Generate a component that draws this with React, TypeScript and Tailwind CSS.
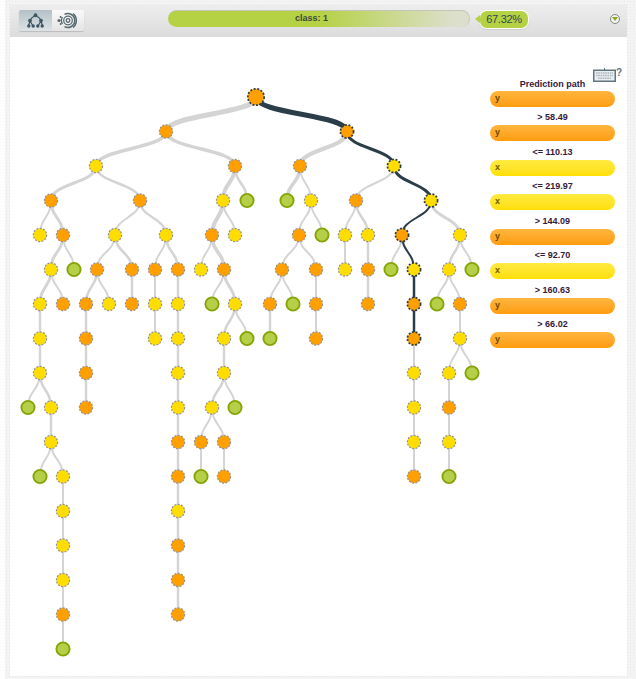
import React from "react";

type C = "O" | "Y" | "G";
type N = { x: number; c: C; w: number; k: N[]; p?: boolean };
const n = (x: number, c: C, w: number, ...k: N[]): N => ({ x, c, w, k });
const d = (x: number, c: C, w: number, ...k: N[]): N => ({ x, c, w, k, p: true });
const chain = (x: number, w: number, cs: C[]): N => {
  const [h, ...r] = cs;
  return n(x, h, w, ...(r.length ? [chain(x, w, r)] : []));
};

const tree: N = d(256, "O", 0,
  n(166, "O", 5,
    n(96, "Y", 3.5,
      n(51, "O", 3,
        n(40, "Y", 2),
        n(63, "O", 3,
          n(51, "Y", 3,
            n(40, "Y", 3,
              n(40, "Y", 2.5,
                n(40, "Y", 2.5,
                  n(28, "G", 2),
                  n(51, "Y", 2.5,
                    n(51, "Y", 2.5,
                      n(40, "G", 2),
                      chain(63, 2, ["Y", "Y", "Y", "Y", "O", "G"])))))),
            n(63, "O", 2)),
          n(74, "G", 2))),
      n(140, "O", 2.5,
        n(115, "Y", 2,
          n(97, "O", 2,
            chain(86, 2.5, ["O", "O", "O", "O"]),
            n(109, "Y", 2)),
          chain(132, 2.5, ["O", "O"])),
        n(166, "Y", 2.5,
          n(155, "O", 2, chain(155, 2, ["Y", "Y"])),
          chain(178, 2.5, ["O", "Y", "Y", "Y", "Y", "O", "O", "Y", "O", "O", "O"])))),
    n(235, "O", 3.5,
      n(223, "Y", 4,
        n(212, "O", 4,
          n(201, "Y", 2),
          n(224, "O", 3.5,
            n(212, "G", 2),
            n(235, "Y", 3,
              n(224, "Y", 2.5,
                n(224, "Y", 2.5,
                  n(212, "Y", 2.5,
                    n(201, "O", 2, n(201, "G", 2)),
                    n(224, "O", 2, n(224, "O", 2))),
                  n(235, "G", 2))),
              n(247, "G", 2)))),
        n(235, "Y", 2)),
      n(247, "G", 2.5))),
  d(347, "O", 5,
    n(300, "O", 4,
      n(287, "G", 3.5),
      n(311, "Y", 2,
        n(299, "O", 2,
          n(282, "O", 2,
            n(270, "O", 2, n(270, "G", 2.5)),
            n(293, "G", 2)),
          n(316, "O", 2, chain(316, 2, ["O", "O"]))),
        n(322, "G", 2))),
    d(394, "Y", 3,
      n(356, "O", 2,
        chain(345, 2, ["Y", "Y"]),
        chain(368, 2.5, ["Y", "O", "O"])),
      d(431, "Y", 3,
        d(402, "O", 2,
          n(391, "G", 2),
          d(414, "Y", 2,
            d(414, "O", 2.5,
              d(414, "O", 2.5, chain(414, 2, ["Y", "Y", "Y", "O"]))))),
        n(460, "Y", 3,
          n(449, "Y", 2.5,
            n(437, "G", 2),
            n(460, "O", 2,
              n(460, "Y", 2,
                chain(449, 2, ["Y", "O", "Y", "G"]),
                n(472, "G", 2)))),
          n(472, "G", 2))))));

const ys = (depth: number) => 97 + 34.5 * depth;
type E = { a: N; b: N; depth: number };
const edges: E[] = [];
const nodes: { v: N; depth: number }[] = [];
const walk = (v: N, depth: number) => {
  nodes.push({ v, depth });
  v.k.forEach((b) => {
    edges.push({ a: v, b, depth });
    walk(b, depth + 1);
  });
};
walk(tree, 0);

const fill = { O: "#ff9f00", Y: "#ffdd00", G: "#b5cf48" };

function Tree() {
  return (
    <svg viewBox="10 37 470 639" className="h-[639px] w-[470px] shrink-0">
      {[false, true].map((dark) =>
        edges
          .filter((e) => !!(e.a.p && e.b.p) === dark)
          .map((e, i) => {
            const y1 = ys(e.depth);
            const y2 = ys(e.depth + 1);
            const m = (y1 + y2) / 2;
            return (
              <path
                key={`${dark}${i}`}
                d={`M${e.a.x} ${y1}C${e.a.x} ${m} ${e.b.x} ${m} ${e.b.x} ${y2}`}
                fill="none"
                stroke={dark ? "#2a3d48" : "#d4d4d4"}
                strokeWidth={e.b.w}
              />
            );
          })
      )}
      {nodes.map(({ v, depth }, i) => {
        const big = depth === 0;
        if (v.c === "G")
          return <circle key={i} cx={v.x} cy={ys(depth)} r={6.6} fill={fill.G} stroke="#86a406" strokeWidth={1.9} />;
        return (
          <circle
            key={i}
            cx={v.x}
            cy={ys(depth)}
            r={big ? 8.2 : 6.6}
            fill={fill[v.c]}
            stroke={v.p ? "#2a3d48" : "#929292"}
            strokeWidth={v.p ? 1.7 : 1.2}
            strokeDasharray={v.p ? "2 1.6" : "2 1.4"}
          />
        );
      })}
    </svg>
  );
}

const TreeIcon = () => (
  <svg width="17" height="15" viewBox="0 0 17 15" fill="none" stroke="#3e5763" strokeWidth="1.2">
    <path d="M8.5 3C5 4 3.5 6 3 8M8.5 3C12 4 13.5 6 14 8M3 8L1.5 13M3 8L6 13M14 8L11 13M14 8L15.5 13" />
    <g fill="#3e5763" stroke="none">
      <circle cx="8.5" cy="2.2" r="1.9" />
      <circle cx="3" cy="7.6" r="1.9" />
      <circle cx="14" cy="7.6" r="1.9" />
      <circle cx="1.8" cy="13" r="1.7" />
      <circle cx="6.2" cy="13" r="1.7" />
      <circle cx="10.8" cy="13" r="1.7" />
      <circle cx="15.2" cy="13" r="1.7" />
    </g>
  </svg>
);

const TargetIcon = () => (
  <svg width="23" height="17" viewBox="0 0 23 17" fill="none" stroke="#55696f">
    <circle cx="11" cy="8.5" r="1.8" strokeWidth="1.3" />
    <circle cx="11" cy="8.5" r="4.3" strokeWidth="1.2" />
    <path d="M7.5 2.3A7 7 0 1 1 7.5 14.7" strokeWidth="1.5" />
    <path d="M16 1.5A9 9 0 0 1 16 15.5" strokeWidth="1.5" />
    <path d="M5.5 5A6.4 6.4 0 0 0 5.5 12" strokeWidth="1.3" />
    <circle cx="2" cy="8.5" r="1.6" fill="#55696f" stroke="none" />
    <circle cx="3.6" cy="5" r="1" fill="#55696f" stroke="none" />
    <circle cx="3.6" cy="12" r="1" fill="#55696f" stroke="none" />
  </svg>
);

const KeyboardIcon = () => (
  <svg width="23" height="14" viewBox="0 0 23 14" fill="none">
    <path d="M11.5 0V2" stroke="#5f7680" />
    <rect x="0.75" y="2.25" width="21.5" height="11" fill="#e9eef0" stroke="#5f7680" strokeWidth="1.5" />
    <g stroke="#a9b8be" strokeWidth="1.4" strokeDasharray="1.6 0.7">
      <path d="M3 5H20M3 7.5H20" />
      <path d="M5 10.3H18" />
    </g>
  </svg>
);

const path: { t: "y" | "x"; l?: string }[] = [
  { t: "y", l: "> 58.49" },
  { t: "y", l: "<= 110.13" },
  { t: "x", l: "<= 219.97" },
  { t: "x", l: "> 144.09" },
  { t: "y", l: "<= 92.70" },
  { t: "x", l: "> 160.63" },
  { t: "y", l: "> 66.02" },
  { t: "y" },
];

export default function App() {
  return (
    <div
      className="h-[679px] w-[636px] overflow-hidden bg-[#fdfdfd] pl-[5px]"
      style={{ fontFamily: '"Liberation Sans", Arial, sans-serif' }}
    >
      <div className="flex h-full flex-col bg-[#f4f4f4] bg-[radial-gradient(#e6e6e6_1px,transparent_1px)] bg-[size:3px_3px] pt-[4px] pr-[9px] pb-[3px] pl-[5px]">
        <header className="flex h-[33px] shrink-0 items-start bg-gradient-to-b from-[#eeeeee] to-[#dcdcdc] pt-[6px] pl-[9px]">
          <div className="flex h-[21px] w-[65px] overflow-hidden rounded-[2px] shadow-[0_1px_1px_#bbbbbb]">
            <div className="flex w-[33px] items-center justify-center bg-gradient-to-b from-[#b3c1c7] to-[#dde3e6]">
              <TreeIcon />
            </div>
            <div className="flex w-[32px] items-center justify-center bg-gradient-to-b from-[#fafafa] to-[#e4e4e4]">
              <TargetIcon />
            </div>
          </div>
          <div className="ml-[84px] flex h-[17px] w-[302px] items-center justify-center rounded-full border-t border-r border-[#c4c7b8] bg-[linear-gradient(90deg,#b5d144_0%,#b5d144_50%,#dcdfcc_95%)] pr-[14px] text-[9px] font-bold text-[#3c4a3c]">
            class: 1
          </div>
          <div className="relative mt-[1px] ml-[10px] flex h-[17px] w-[48px] items-center justify-center rounded-[7px] bg-[#b5d144] text-[11px] tracking-[-0.3px] text-[#2d4a50] shadow-[0_0_0_1px_#ffffff,0_1px_2px_#a8a8a8]">
            <span className="absolute top-[4px] left-[-5px] h-0 w-0 border-y-[4px] border-r-[5px] border-y-transparent border-r-[#b5d144]" />
            67.32%
          </div>
          <div className="mt-[4px] ml-[82px] flex h-[10px] w-[10px] items-center justify-center rounded-full border border-[#7d8c80] bg-[#f2f2f2]">
            <span className="h-0 w-0 border-x-[3px] border-t-[4px] border-x-transparent border-t-[#8fa81c]" />
          </div>
        </header>
        <main className="flex min-h-0 flex-1 bg-white">
          <Tree />
          <aside className="ml-[10px] flex w-[125px] shrink-0 flex-col pt-[31px]">
            <div className="flex h-[14px] justify-end">
              <div className="relative -mr-[1px]">
                <KeyboardIcon />
                <span className="absolute top-[-3px] right-[-6px] text-[10px] font-bold text-[#5f7680]">?</span>
              </div>
            </div>
            <div className="-mt-[2px] mb-[2px] flex h-[8.5px] items-center justify-center text-[9px] leading-none font-bold text-[#33193c]">
              Prediction path
            </div>
            {path.map((p, i) => (
              <React.Fragment key={i}>
                <div
                  className={
                    p.t === "y"
                      ? "flex h-[16px] shrink-0 items-center rounded-full bg-gradient-to-b from-[#ffb63c] to-[#ff9c08] pl-[5px] text-[9px] font-bold text-[#6b4a00]"
                      : "flex h-[16px] shrink-0 items-center rounded-full bg-gradient-to-b from-[#ffea3e] to-[#ffdf00] pl-[5px] text-[9px] font-bold text-[#6b6000]"
                  }
                >
                  {p.t}
                </div>
                {p.l && (
                  <div className="flex h-[18.5px] shrink-0 items-center justify-center pt-[4px] text-[9px] font-bold text-[#33193c]">
                    {p.l}
                  </div>
                )}
              </React.Fragment>
            ))}
          </aside>
        </main>
      </div>
    </div>
  );
}
